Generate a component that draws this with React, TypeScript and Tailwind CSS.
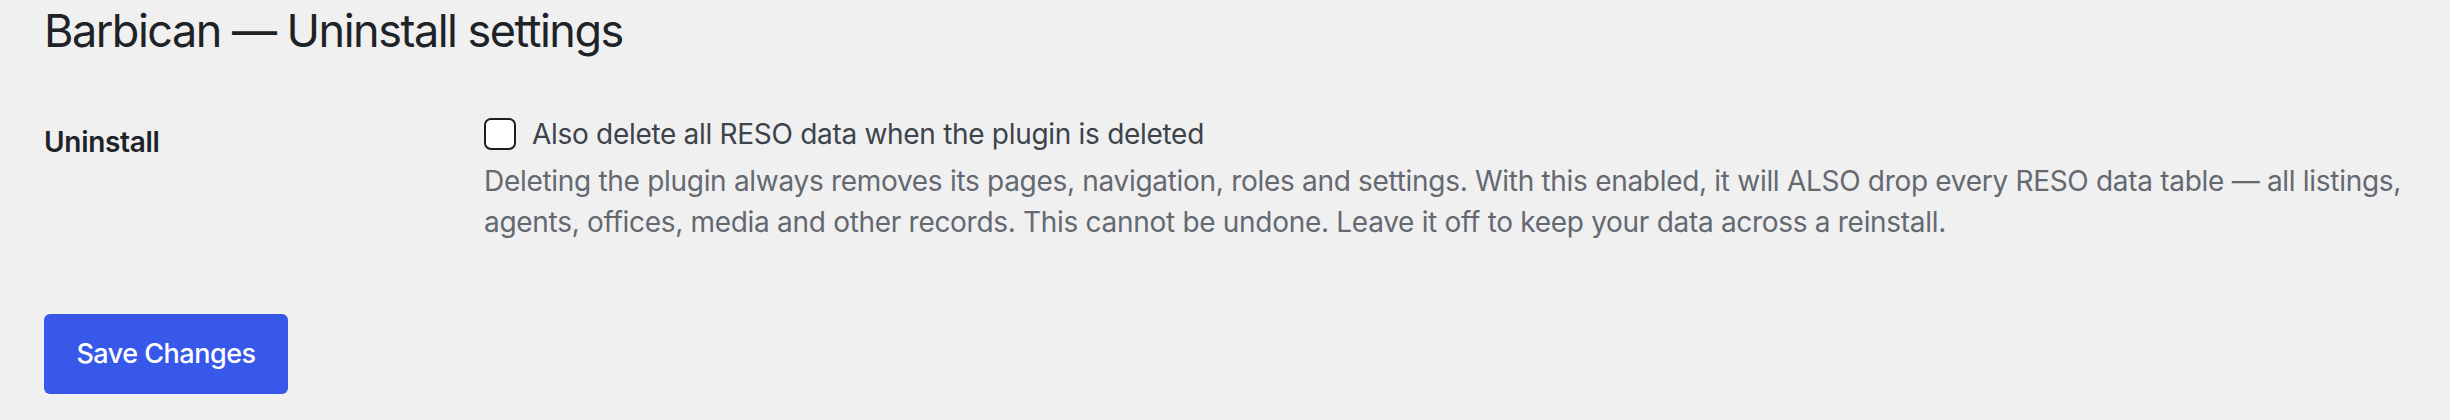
export default function App() {
  return (
    <div className="min-h-[420px] bg-[#f0f0f1] font-['Inter',sans-serif] text-[#3c434a]">
      <div className="pl-[44px] pr-[40px] pt-[1px]">
        {/* Page title */}
        <h1 className="text-[45px] leading-[60px] font-normal text-[#1d2327] tracking-[-1.5px]">
          Barbican — Uninstall settings
        </h1>

        {/* Settings table */}
        <div className="mt-[22px] grid grid-cols-[440px_1fr]">
          <div className="pt-[38px] text-[28px] leading-[42px] font-semibold text-[#1d2327] tracking-[-0.3px]">
            Uninstall
          </div>
          <div className="pt-[30px]">
            <label className="flex items-center gap-[16px] text-[28px] leading-[42px] tracking-[-0.3px]">
              <span className="w-[32px] h-[32px] shrink-0 rounded-[7px] border-2 border-[#1e1e1e] bg-white" />
              Also delete all RESO data when the plugin is deleted
            </label>
            <p className="mt-[6px] text-[28px] leading-[41px] text-[#646970] tracking-[-0.3px]">
              Deleting the plugin always removes its pages, navigation, roles and settings. With this enabled, it will ALSO drop every RESO data table — all listings, agents, offices, media and other records. This cannot be undone. Leave it off to keep your data across a reinstall.
            </p>
          </div>
        </div>

        {/* Submit */}
        <div className="mt-[71px]">
          <button className="h-[80px] w-[244px] rounded-[6px] bg-[#3858e9] text-[27px] font-medium text-white tracking-[-0.5px]">
            Save Changes
          </button>
        </div>
      </div>
    </div>
  );
}
